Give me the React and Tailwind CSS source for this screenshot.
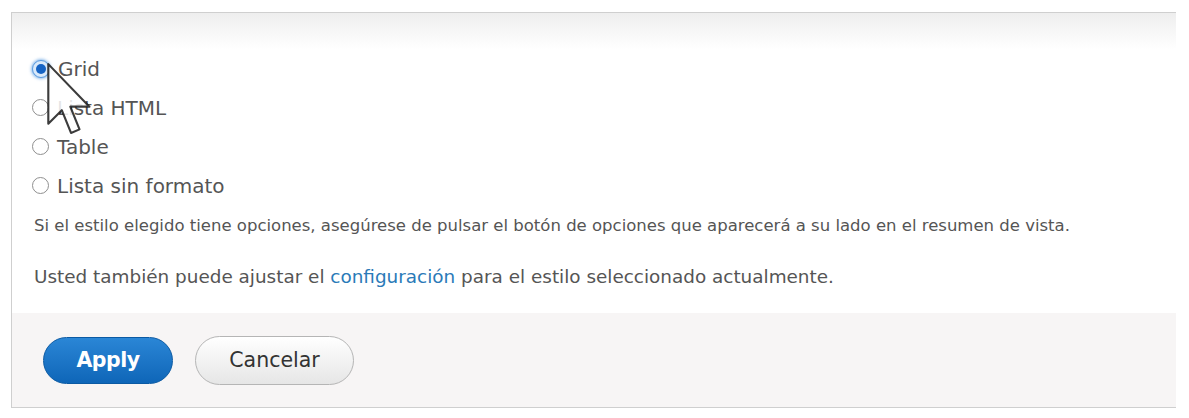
import { useState } from 'react';

const options = ['Grid', 'Lista HTML', 'Table', 'Lista sin formato'];

function Radio({ checked }) {
  return checked ? (
    <span className="flex h-[18px] w-[18px] items-center justify-center rounded-full border border-[#5a9be0] bg-[#d9e9fa] shadow-[0_0_3px_1px_rgba(90,155,224,0.7)]">
      <span className="h-[10px] w-[10px] rounded-full bg-[#1563c4]" />
    </span>
  ) : (
    <span className="h-[17px] w-[17px] rounded-full border-[1.5px] border-[#8f8f8f] bg-white" />
  );
}

function Cursor() {
  return (
    <svg className="pointer-events-none absolute left-[46px] top-[62px]" width="50" height="78" viewBox="0 0 14 22">
      <path
        d="M0.6 0.6 L0.6 17.4 L4.4 13.6 L7 20 L9.4 19 L6.8 12.6 L12.2 12.6 Z"
        fill="white"
        fillOpacity="0.85"
        stroke="#1a1a1a"
        strokeOpacity="0.85"
        strokeWidth="0.6"
        strokeLinejoin="round"
      />
    </svg>
  );
}

export default function App() {
  const [value, setValue] = useState('Grid');

  return (
    <div className="relative h-[418px] w-[1189px] bg-white pt-[12px] pl-[11px] font-['DejaVu_Sans',sans-serif] text-[#555]">
      <div className="h-[396px] w-[1165px] border-t border-l border-b border-[#cfcfcf]">
        <div className="h-[36px] bg-gradient-to-b from-[#eeeeee] to-white" />

        <div className="flex flex-col pl-[20px]">
          {options.map((opt) => (
            <label
              key={opt}
              className="flex h-[39px] cursor-pointer items-center gap-[8px] text-[20px] leading-none text-[#555]"
              onClick={() => setValue(opt)}
            >
              <Radio checked={value === opt} />
              <span>{opt}</span>
            </label>
          ))}
        </div>

        <p className="flex h-[42px] items-center pl-[22px] text-[16.5px] leading-none text-[#555]">
          Si el estilo elegido tiene opciones, asegúrese de pulsar el botón de opciones que aparecerá a su lado en el resumen de vista.
        </p>
        <p className="mt-[10px] flex h-[40px] items-center pl-[22px] text-[18.4px] leading-none text-[#555]">
          <span>
            Usted también puede ajustar el <a className="text-[#2a7ab8]">configuración</a> para el estilo seleccionado actualmente.
          </span>
        </p>

        <div className="mt-[16px] flex h-[94px] items-center gap-[22px] bg-[#f7f5f5] pl-[31px]">
          <button className="h-[47px] w-[130px] rounded-full border border-[#0b5aa3] bg-gradient-to-b from-[#2a86d6] to-[#0e66b8] text-[20.5px] font-bold tracking-[-0.5px] text-white">
            Apply
          </button>
          <button className="h-[49px] w-[159px] rounded-full border border-[#b5b5b5] bg-gradient-to-b from-white to-[#e6e6e6] text-[20.5px] text-[#333]">
            Cancelar
          </button>
        </div>
      </div>
      <Cursor />
    </div>
  );
}
